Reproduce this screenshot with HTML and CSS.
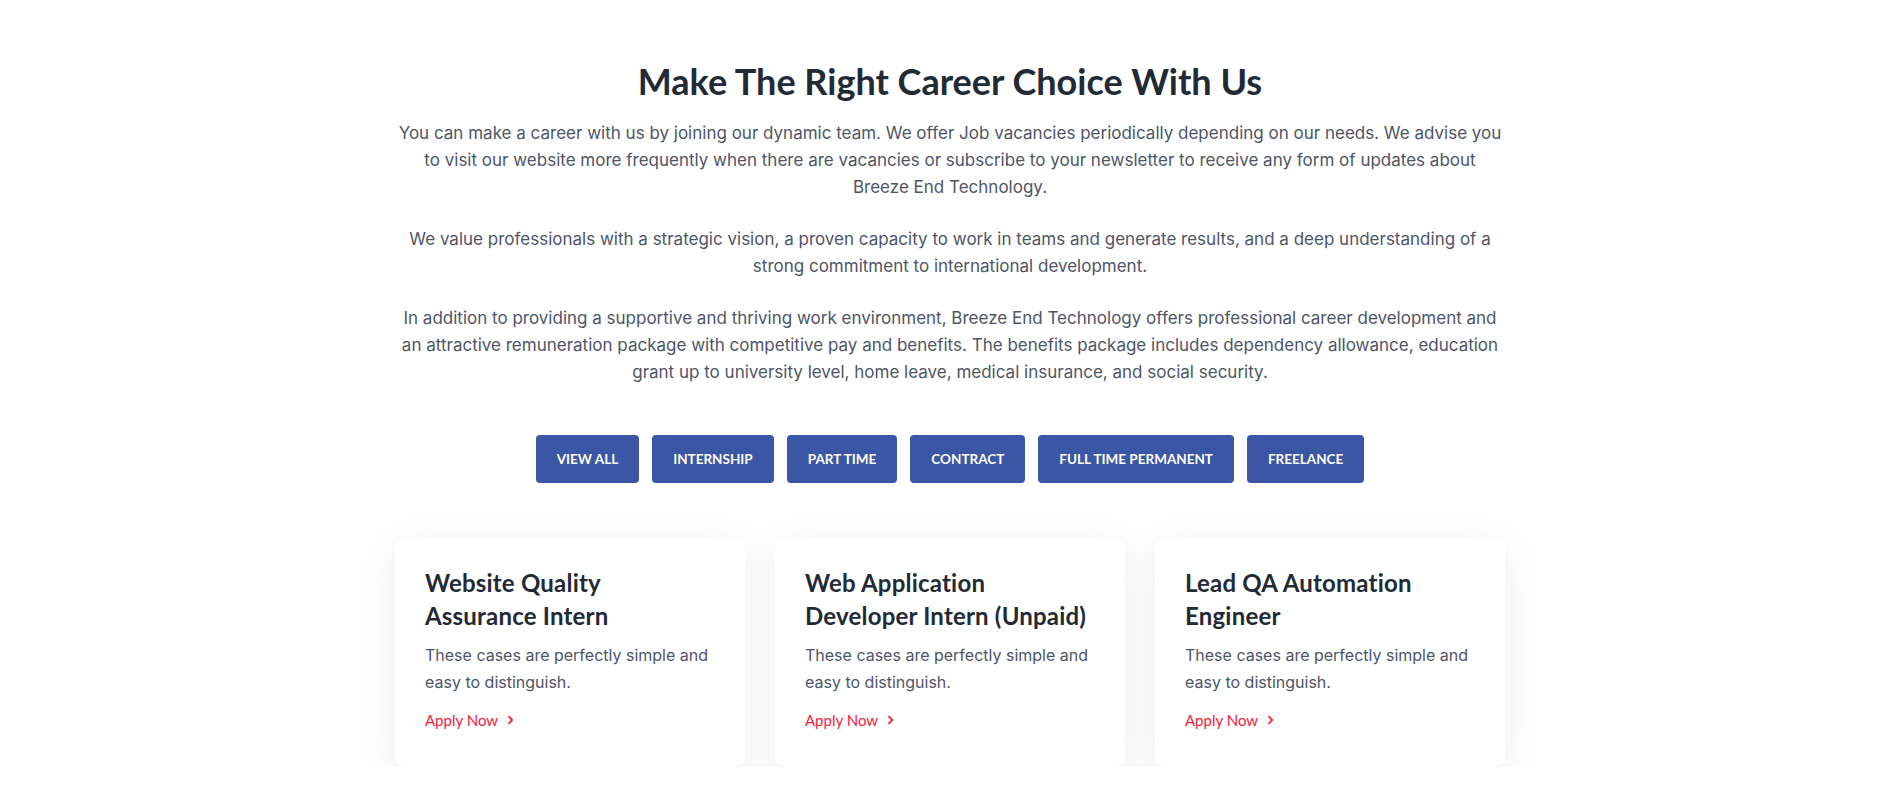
FILE: index.html
```html
<!DOCTYPE html>
<html lang="en">
<head>
<meta charset="utf-8">
<title>Careers</title>
<link rel="stylesheet" href="styles.css">
</head>
<body>
<section class="careers">
  <div class="container">
    <h2 class="title">Make The Right Career Choice With Us</h2>
    <div class="intro">
      <p>You can make a career with us by joining our dynamic team. We offer Job vacancies periodically depending on our needs. We advise you to visit our website more frequently when there are vacancies or subscribe to your newsletter to receive any form of updates about Breeze End Technology.</p>
      <p>We value professionals with a strategic vision, a proven capacity to work in teams and generate results, and a deep understanding of a strong commitment to international development.</p>
      <p>In addition to providing a supportive and thriving work environment, Breeze End Technology offers professional career development and an attractive remuneration package with competitive pay and benefits. The benefits package includes dependency allowance, education grant up to university level, home leave, medical insurance, and social security.</p>
    </div>
    <div class="filters">
      <button class="filter">VIEW ALL</button>
      <button class="filter">INTERNSHIP</button>
      <button class="filter">PART TIME</button>
      <button class="filter">CONTRACT</button>
      <button class="filter">FULL TIME PERMANENT</button>
      <button class="filter">FREELANCE</button>
    </div>
    <div class="jobs">
      <div class="job">
        <h3 class="job-title">Website Quality Assurance Intern</h3>
        <p class="job-desc">These cases are perfectly simple and easy to distinguish.</p>
        <a class="apply" href="#">Apply Now <svg class="chev" width="7" height="10" viewBox="0 0 7 10"><path d="M1.5 1.2 L5.2 5 L1.5 8.8" fill="none" stroke="#f7213a" stroke-width="1.8"/></svg></a>
      </div>
      <div class="job">
        <h3 class="job-title">Web Application Developer Intern (Unpaid)</h3>
        <p class="job-desc">These cases are perfectly simple and easy to distinguish.</p>
        <a class="apply" href="#">Apply Now <svg class="chev" width="7" height="10" viewBox="0 0 7 10"><path d="M1.5 1.2 L5.2 5 L1.5 8.8" fill="none" stroke="#f7213a" stroke-width="1.8"/></svg></a>
      </div>
      <div class="job">
        <h3 class="job-title">Lead QA Automation Engineer</h3>
        <p class="job-desc">These cases are perfectly simple and easy to distinguish.</p>
        <a class="apply" href="#">Apply Now <svg class="chev" width="7" height="10" viewBox="0 0 7 10"><path d="M1.5 1.2 L5.2 5 L1.5 8.8" fill="none" stroke="#f7213a" stroke-width="1.8"/></svg></a>
      </div>
    </div>
  </div>
</section>
</body>
</html>
```
FILE: styles.css
```css
* { box-sizing: border-box; }
html, body { margin: 0; padding: 0; background: #ffffff; }
body {
  font-family: "Inter", "Liberation Sans", sans-serif;
  color: #4e5566;
  font-size: 16px;
}
.careers { padding: 57px 0 0 7px; }
.container {
  width: 1110px;
  margin: 0 auto;
}
.title {
  margin: 0 0 15px;
  text-align: center;
  font-family: "Lato", "Liberation Sans", sans-serif;
  font-weight: 700;
  font-size: 36px;
  line-height: 48px;
  color: #222a36;
}
.intro p {
  margin: 0 0 25px;
  text-align: center;
  font-size: 17px;
  line-height: 27px;
}
.intro p:last-child { margin-bottom: 0; }
.filters {
  display: flex;
  justify-content: center;
  gap: 13px;
  margin-top: 49px;
}
.filter {
  height: 48px;
  padding: 0 21px;
  border: none;
  border-radius: 4px;
  background: #3a56a5;
  color: #ffffff;
  font-family: "Lato", "Liberation Sans", sans-serif;
  font-weight: 700;
  font-size: 13.5px;
}
.jobs {
  display: grid;
  grid-template-columns: repeat(3, 1fr);
  gap: 30px;
  margin-top: 54px;
}
.job {
  background: #ffffff;
  border-radius: 10px;
  padding: 29px 30px 31px;
  box-shadow: 0 10px 40px rgba(0, 0, 0, 0.07);
  height: 230px;
}
.job-title {
  margin: 0 0 10px;
  font-family: "Lato", "Liberation Sans", sans-serif;
  font-weight: 700;
  font-size: 24px;
  letter-spacing: 0.2px;
  line-height: 33px;
  color: #222a36;
}
.job-desc {
  margin: 0 0 14px;
  line-height: 27px;
}
.apply {
  display: inline-flex;
  align-items: center;
  gap: 9px;
  text-decoration: none;
  color: #f7213a;
  font-family: "Lato", "Liberation Sans", sans-serif;
  font-size: 15px;
}
```
